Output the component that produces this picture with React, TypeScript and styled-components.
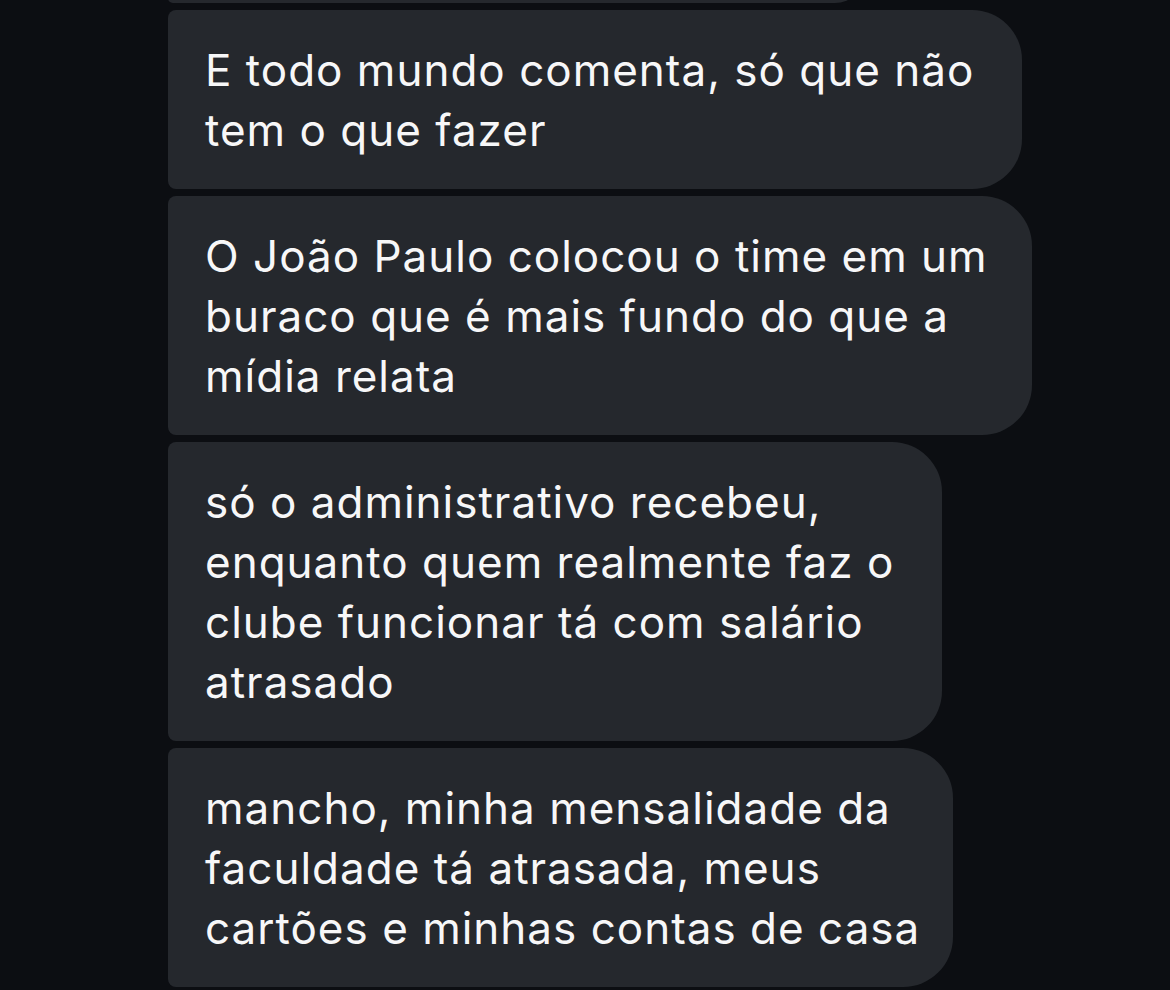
import React from "react";
import styled, { createGlobalStyle } from "styled-components";

const GlobalStyle = createGlobalStyle`
  html, body {
    margin: 0;
    padding: 0;
    background: #0c0e12;
  }
  body {
    font-family: Inter, "Noto Sans", "Liberation Sans", sans-serif;
    -webkit-font-smoothing: antialiased;
  }
`;

type Message = {
  width: number;
  lines: string[];
};

const messages: Message[] = [
  {
    width: 854,
    lines: ["E todo mundo comenta, só que não", "tem o que fazer"],
  },
  {
    width: 864,
    lines: [
      "O João Paulo colocou o time em um",
      "buraco que é mais fundo do que a",
      "mídia relata",
    ],
  },
  {
    width: 774,
    lines: [
      "só o administrativo recebeu,",
      "enquanto quem realmente faz o",
      "clube funcionar tá com salário",
      "atrasado",
    ],
  },
  {
    width: 785,
    lines: [
      "mancho, minha mensalidade da",
      "faculdade tá atrasada, meus",
      "cartões e minhas contas de casa",
    ],
  },
];

const App = () => {
  return (
    <>
      <GlobalStyle />
      <Thread>
        <PreviousBubble />
        {messages.map((msg, i) => (
          <Bubble key={i} $width={msg.width}>
            {msg.lines.map((line, j) => (
              <Line key={j}>{line}</Line>
            ))}
          </Bubble>
        ))}
      </Thread>
    </>
  );
};

const Thread = styled.div`
  display: flex;
  flex-direction: column;
  align-items: flex-start;
  gap: 7px;
  width: 1170px;
  height: 990px;
  overflow: hidden;
  padding-left: 168px;
  box-sizing: border-box;
  background: #0c0e12;
`;

const Bubble = styled.div<{ $width: number }>`
  width: ${(p) => p.$width}px;
  box-sizing: border-box;
  padding: 30px 0 29px 37px;
  background: #25282d;
  border-radius: 8px 50px 50px 8px;
  color: #f7f7f8;
  font-size: 44px;
  letter-spacing: 1px;
  line-height: 60px;
  flex-shrink: 0;
`;

// tail end of the message above, scrolled mostly out of view
const PreviousBubble = styled.div`
  width: 697px;
  height: 60px;
  margin-top: -57px;
  flex-shrink: 0;
  background: #25282d;
  border-radius: 8px 50px 50px 8px;
`;

const Line = styled.div`
  white-space: nowrap;
`;

export default App;
